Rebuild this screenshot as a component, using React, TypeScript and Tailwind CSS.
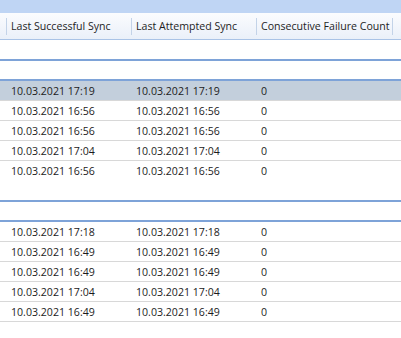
import React from "react";

type Row = { s: string; a: string; c: string; sel?: boolean };

const g1: Row[] = [
  { s: "10.03.2021 17:19", a: "10.03.2021 17:19", c: "0", sel: true },
  { s: "10.03.2021 16:56", a: "10.03.2021 16:56", c: "0" },
  { s: "10.03.2021 16:56", a: "10.03.2021 16:56", c: "0" },
  { s: "10.03.2021 17:04", a: "10.03.2021 17:04", c: "0" },
  { s: "10.03.2021 16:56", a: "10.03.2021 16:56", c: "0" },
];
const g2: Row[] = [
  { s: "10.03.2021 17:18", a: "10.03.2021 17:18", c: "0" },
  { s: "10.03.2021 16:49", a: "10.03.2021 16:49", c: "0" },
  { s: "10.03.2021 16:49", a: "10.03.2021 16:49", c: "0" },
  { s: "10.03.2021 17:04", a: "10.03.2021 17:04", c: "0" },
  { s: "10.03.2021 16:49", a: "10.03.2021 16:49", c: "0" },
];

function Group({ rows, lastBorder }: { rows: Row[]; lastBorder: boolean }) {
  return (
    <div className="flex flex-col">
      <div className="h-[19px] bg-white" />
      <div className="h-[2px] bg-[#7ea3d8]" />
      <div className="h-[18px] bg-white" />
      <div className="h-[2px] bg-[#7ea3d8]" />
      {rows.map((r, i) => {
        const border = i < rows.length - 1 || lastBorder;
        return (
          <div
            key={i}
            className={
              "flex h-[20px] items-center pt-[2px] pl-[11px] whitespace-nowrap " +
              (r.sel ? "bg-[#c3cfdc] " : "bg-white ") +
              (border ? "border-b border-[#d8d8d8]" : "")
            }
          >
            <div className="w-[125px]">{r.s}</div>
            <div className="w-[125px]">{r.a}</div>
            <div className="flex-1">{r.c}</div>
          </div>
        );
      })}
    </div>
  );
}

export default function App() {
  return (
    <div
      className="w-[401px] h-[338px] overflow-hidden bg-white text-[10.6px] text-[#1b1b1b]"
      style={{ fontFamily: '"Open Sans", "Noto Sans", sans-serif' }}
    >
      <div className="h-[13px] bg-[#bfd5f4]" />
      <div className="flex h-[27px] items-center whitespace-nowrap bg-gradient-to-b from-[#fbfcfe] to-[#eaf0f9] border-b border-[#a9c3e6] text-[#1e1e1e]">
        <div className="w-[7px] h-[17px] shrink-0 border-r border-[#c3d3e8]" />
        <div className="w-[125px] h-[17px] shrink-0 flex items-center pt-[1px] pl-[4px] border-r border-[#c3d3e8]">
          Last Successful Sync
        </div>
        <div className="w-[125px] h-[17px] shrink-0 flex items-center pt-[1px] pl-[4px] border-r border-[#c3d3e8]">
          Last Attempted Sync
        </div>
        <div className="w-[136px] h-[17px] shrink-0 flex items-center pt-[1px] pl-[4px] border-r border-[#c3d3e8]">
          Consecutive Failure Count
        </div>
      </div>
      <Group rows={g1} lastBorder={false} />
      <Group rows={g2} lastBorder={true} />
    </div>
  );
}
